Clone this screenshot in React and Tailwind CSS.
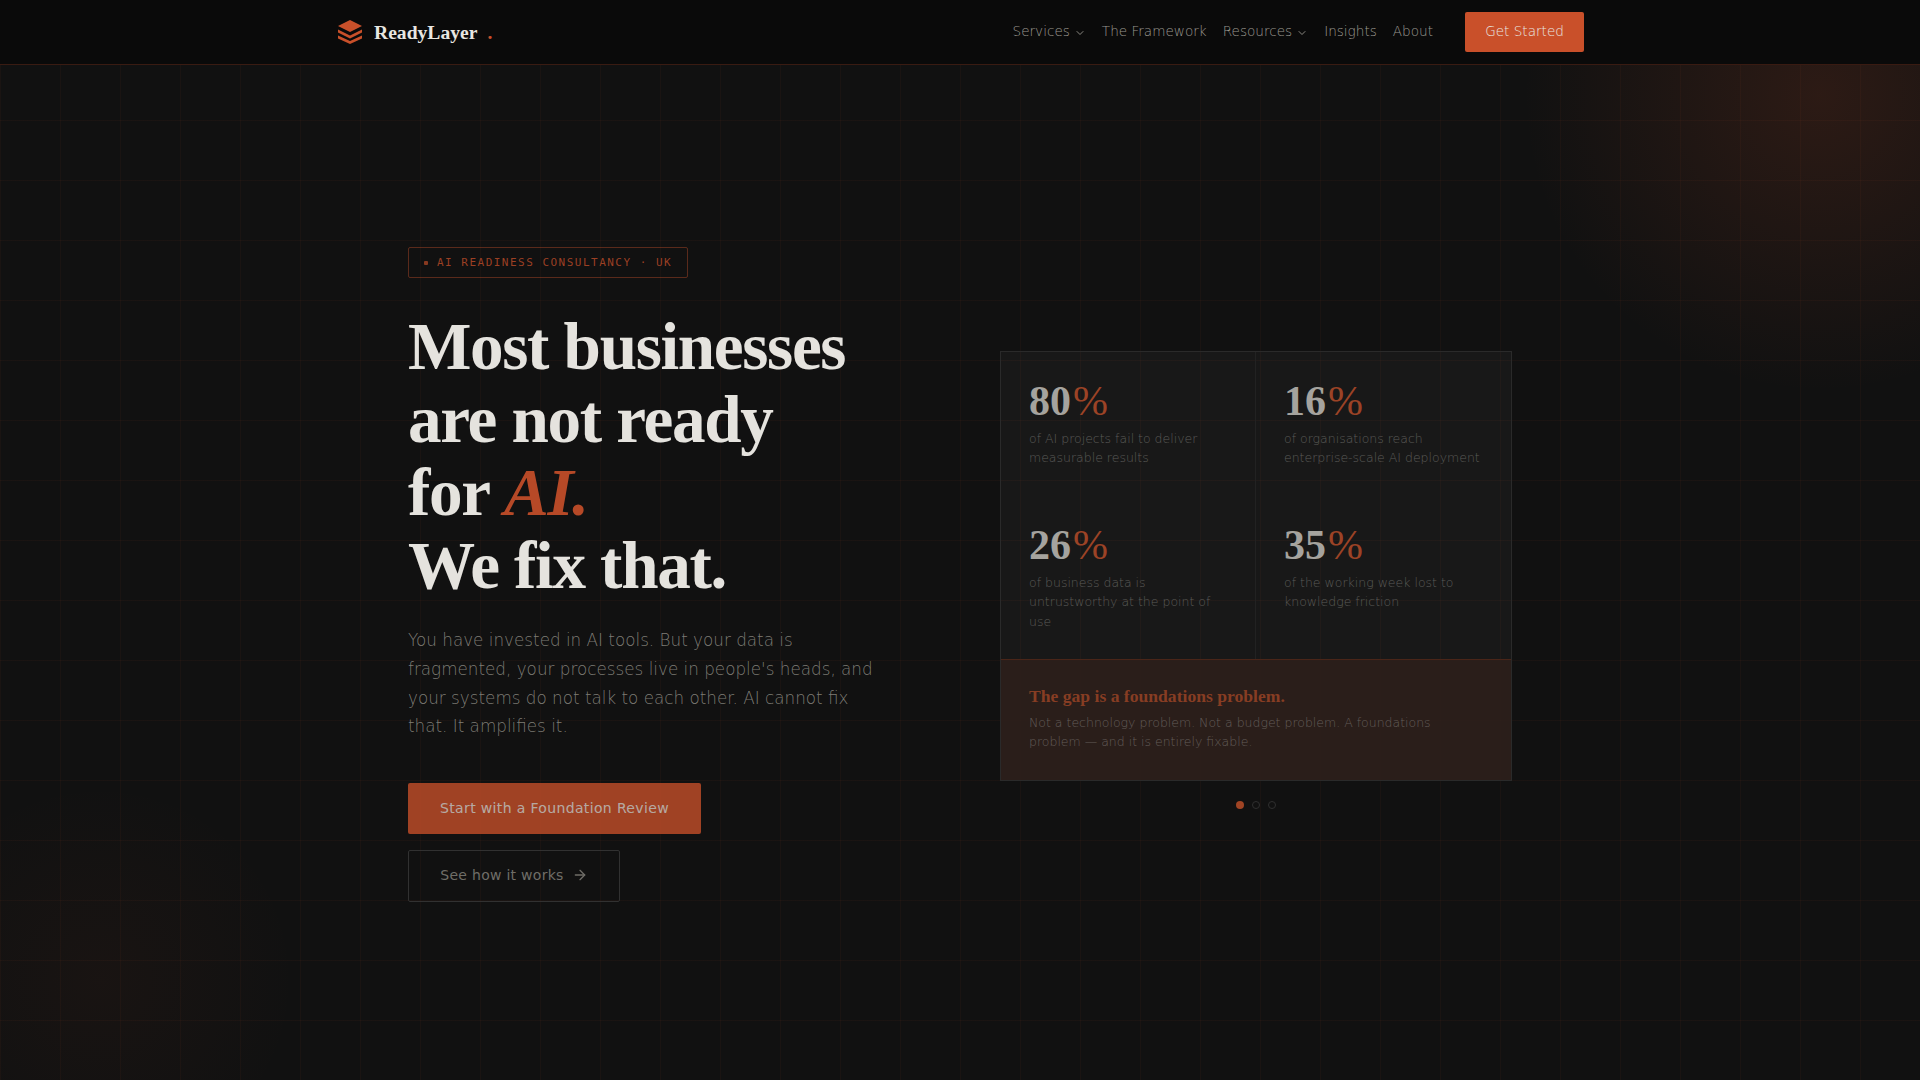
import { ChevronDown, ArrowRight } from 'lucide-react';

const sans = 'font-["DejaVu_Sans",sans-serif]';
const serif = 'font-["Liberation_Serif",serif]';

const stats = [
  { value: '80', label: 'of AI projects fail to deliver measurable results' },
  { value: '16', label: 'of organisations reach enterprise-scale AI deployment' },
  { value: '26', label: 'of business data is untrustworthy at the point of use' },
  { value: '35', label: 'of the working week lost to knowledge friction' },
];

const LogoMark = () => (
  <svg width="24" height="24" viewBox="0 0 24 24" className="shrink-0">
    <path d="M12 0 24 6 12 12 0 6Z" fill="#c9502a" />
    <path d="M0 9.5 12 15.5 24 9.5V12.5L12 18.5 0 12.5Z" fill="#c9502a" />
    <path d="M0 15.5 12 21 24 15.5V18.5L12 24 0 18.5Z" fill="#c9502a" />
  </svg>
);

const NavLink = ({ children, caret }) => (
  <a className="flex items-center pb-[2px] text-[13.6px] font-light text-[#9a9890] leading-5">
    {children}
    {caret && <ChevronDown className="ml-1 w-3 h-3 mt-[4px]" strokeWidth={1.75} />}
  </a>
);

const Nav = () => (
  <nav className="h-[65px] bg-[#0a0a0a] border-b border-[#c9502a]/25 relative z-10">
    <div className="max-w-[1280px] mx-auto h-full px-4 flex items-center justify-between">
      <div className="flex items-center gap-3 pl-[2px]">
        <LogoMark />
        <span className={`${serif} pt-[1px] font-bold text-[19.6px] text-[#e8e6e1]`}>ReadyLayer</span>
        <span className={`${serif} pt-[1px] -ml-[2px] font-bold text-[19.6px] text-[#c9502a]`}>.</span>
      </div>
      <div className="flex items-center">
        <div className="flex items-center gap-4">
          <NavLink caret>Services</NavLink>
          <NavLink>The Framework</NavLink>
          <NavLink caret>Resources</NavLink>
          <NavLink>Insights</NavLink>
          <NavLink>About</NavLink>
        </div>
        <button className="ml-8 h-10 w-[119px] pb-[2px] rounded-[2px] bg-[#c9502a] text-[13.6px] font-light text-[#e8e6e1]">Get Started</button>
      </div>
    </div>
  </nav>
);

const HeroCopy = () => (
  <div className="flex flex-col items-start">
    <div className='flex items-center gap-[9px] h-[31px] w-[280px] pl-[15px] pt-[1px] border border-[#c9502a]/40 rounded-[2px] font-["DejaVu_Sans_Mono",monospace] text-[11px] tracking-[0.135em] text-[#c9502a]/75'>
      <span className="w-[4px] h-[4px] bg-[#c9502a]/65 rounded-[1px]" />
      AI READINESS CONSULTANCY · UK
    </div>
    <h1 className={`${serif} mt-8 font-bold text-[67.2px] leading-[73px] tracking-[-0.02em] text-[#e5e3de]`}>
      Most businesses<br />are not ready<br />for <em className="text-[#c9502a]/90">AI.</em><br />We fix that.
    </h1>
    <p className="mt-6 w-[480px] text-[16.8px] font-light leading-[28.56px] text-[#8a8880]/90">
      You have invested in AI tools. But your data is fragmented, your processes live in people's heads, and your systems do not talk to each other. AI cannot fix that. It amplifies it.
    </p>
    <div className="mt-[42px] flex flex-col items-start gap-4 opacity-[0.78]">
      <button className="h-[51px] w-[293px] rounded-[2px] bg-[#c9502a] text-sm tracking-[0.025em] text-[#e8e6e1]/90">Start with a Foundation Review</button>
      <button className="h-[52px] w-[212px] pb-[1px] flex items-center justify-center gap-2 rounded-[2px] border border-[#3a3a3a] text-sm tracking-[0.02em] text-[#8a8880]">
        See how it works <ArrowRight className="w-4 h-4" />
      </button>
    </div>
  </div>
);

const StatCard = () => (
  <div className="flex flex-col items-center translate-y-[5px]">
    <div className="w-full border border-[#2a2a2a] bg-white/[0.03]">
      <div className="grid grid-cols-2">
        {stats.map((s, i) => (
          <div key={s.value} className={`px-7 pt-[25px] ${i < 2 ? 'h-[144px]' : 'h-[163px]'} ${i % 2 === 0 ? 'border-r border-[#222222]' : ''}`}>
            <div className={`${serif} text-[42px] leading-[48px] font-bold text-[#a5a39e]`}>
              {s.value}<span className="ml-[2px] font-normal text-[#9c4326]">%</span>
            </div>
            <p className="mt-1 text-[12.5px] font-light leading-[19.5px] text-[#5a5a57]">{s.label}</p>
          </div>
        ))}
      </div>
      <div className="h-[121px] px-7 pt-6 border-t border-[#4a2518] bg-[#2c1f1b]/90">
        <h3 className={`${serif} text-[17.6px] font-bold leading-[24px] text-[#873d23]`}>The gap is a foundations problem.</h3>
        <p className="mt-[5px] text-[12.5px] font-light leading-[19.5px] text-[#625c58]">
          Not a technology problem. Not a budget problem. A foundations problem — and it is entirely fixable.
        </p>
      </div>
    </div>
    <div className="mt-[20px] flex items-center gap-2">
      <span className="w-2 h-2 rounded-full bg-[#a04424]" />
      <span className="w-2 h-2 rounded-full border border-[#2f2f2f]" />
      <span className="w-2 h-2 rounded-full border border-[#2f2f2f]" />
    </div>
  </div>
);

export default function App() {
  return (
    <div className={`${sans} min-h-screen bg-[#111111]`}>
      <Nav />
      <main className="relative h-[1015px] pt-1 overflow-hidden flex items-center bg-[linear-gradient(rgba(201,80,42,0.05)_1px,transparent_1px),linear-gradient(90deg,rgba(201,80,42,0.05)_1px,transparent_1px)] bg-[size:60px_60px] bg-[position:0_-5px]">
        <div className="absolute top-[-270px] right-[-200px] w-[600px] h-[600px] bg-[radial-gradient(circle,rgba(201,80,42,0.15)_0%,transparent_70%)]" />
        <div className="absolute bottom-[-100px] left-[-100px] w-[400px] h-[400px] bg-[radial-gradient(circle,rgba(201,80,42,0.045)_0%,transparent_70%)]" />
        <div className="relative w-[1104px] mx-auto grid grid-cols-2 gap-20 items-center">
          <HeroCopy />
          <StatCard />
        </div>
      </main>
    </div>
  );
}
